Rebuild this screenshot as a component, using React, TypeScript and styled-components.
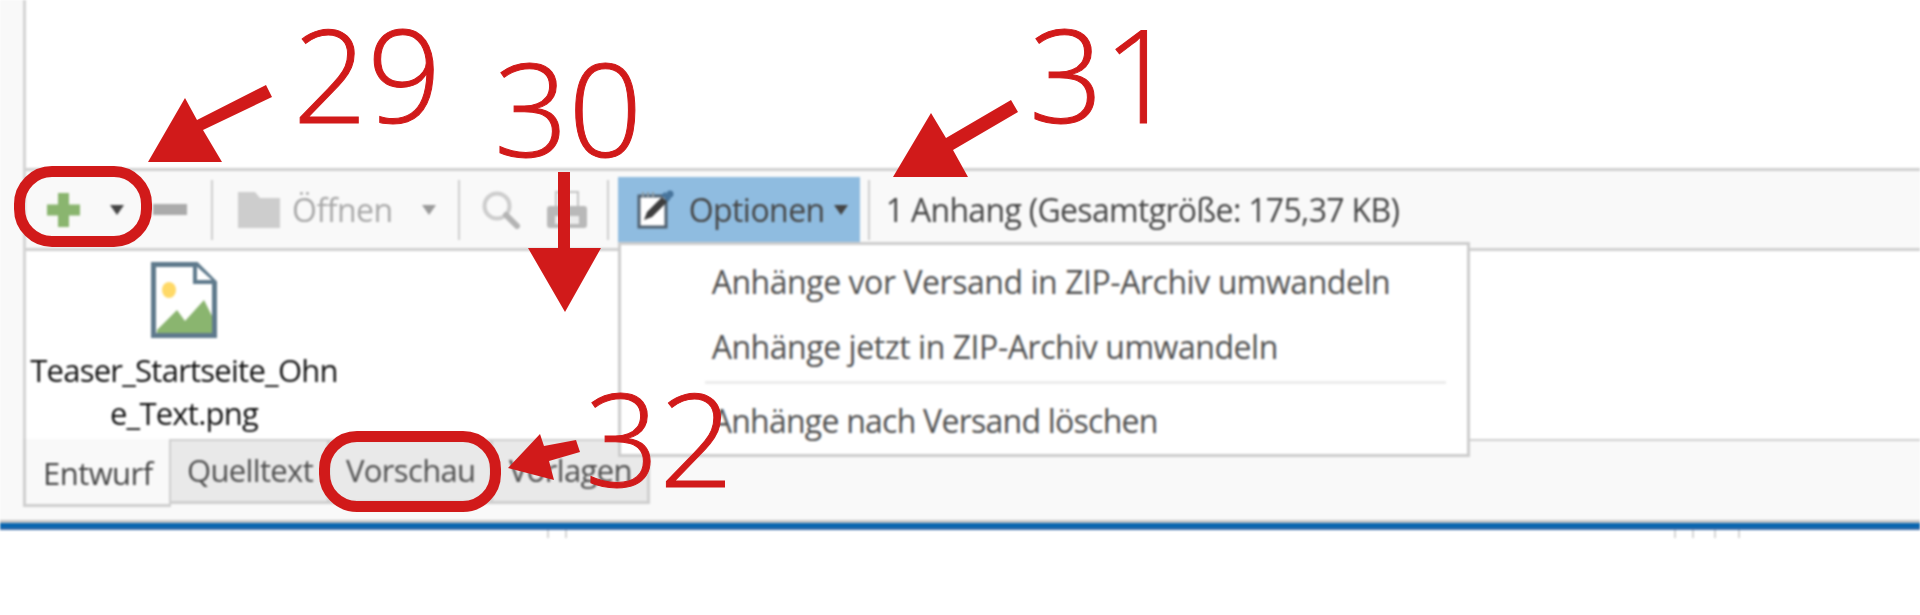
import React from "react";
import styled, { createGlobalStyle } from "styled-components";

const Global = createGlobalStyle`
  html, body { margin: 0; padding: 0; background: #fff; overflow: hidden; }
  * { box-sizing: border-box; }
`;
const RED = "#d11a1a";
const FONT = `"Open Sans", "Noto Sans", "Liberation Sans", sans-serif`;

const Page = styled.div`
  position: relative; width: 1920px; height: 615px; overflow: hidden; background: #fff;
  font-family: ${FONT};
`;
const Shot = styled.div`display: flex; flex-direction: column; filter: blur(0.9px);`;
const Upper = styled.div`display: flex; height: 439px; background: #f9f9f9;`;
const Main = styled.div`
  flex: 1; display: flex; flex-direction: column; margin-left: 23px;
  border-left: 3px solid #d4d4d4; background: #fff;
`;
const Blank = styled.div`height: 168px;`;
const Toolbar = styled.div`
  position: relative; z-index: 2; height: 83px; display: flex; align-items: center;
  background: #f9f9f9; border-top: 3px solid #d0d0d0; border-bottom: 3px solid #d0d0d0;
`;
const Slot = styled.div<{ $ml: number }>`display: flex; flex: none; margin-left: ${p => p.$ml}px;`;
const Sep = styled.div<{ $ml: number }>`
  flex: none; width: 2px; height: 60px; margin-left: ${p => p.$ml}px; background: #cfcfcf;
`;
const Label = styled.span<{ $ml: number; $muted?: boolean; $sp: number }>`
  flex: none; margin-left: ${p => p.$ml}px; font-size: 32px; line-height: 40px;
  letter-spacing: ${p => p.$sp}px; color: ${p => (p.$muted ? "#a9a9a9" : "#454545")}; white-space: nowrap;
`;
const OptionWrap = styled.div`position: relative; flex: none; margin-left: 9px;`;
const OptionButton = styled.div`
  width: 242px; height: 66px; background: #8fbce0; display: flex; align-items: center; padding-left: 19px;
`;
const Menu = styled.div`
  position: absolute; top: 65px; left: 0; width: 852px; height: 215px; background: #fff;
  border: 3px solid #cdcdcd; padding-top: 4px;
`;
const MenuItem = styled.div<{ $sp: number }>`
  height: 65px; line-height: 65px; padding-left: 91px; font-size: 32px; color: #505050;
  letter-spacing: ${p => p.$sp}px; white-space: nowrap;
`;
const MenuSep = styled.div`height: 3px; margin: 2px 21px 4px 84px; background: #ececec;`;
const Pane = styled.div`flex: 1; padding: 11px 0 0 2px; width: 314px; display: flex; flex-direction: column; align-items: center;`;
const FileName = styled.div`
  margin-top: 11px; font-size: 31px; line-height: 43px; text-align: center; color: #111;
  letter-spacing: -0.75px; white-space: nowrap;
`;
const Strip = styled.div`
  height: 84px; background: #f9f9f9; border-bottom: 3px solid #c6c6c6;
  padding-left: 23px; display: flex; align-items: flex-start;
`;
const ActiveTab = styled.div`
  width: 148px; height: 68px; background: #f9f9f9; color: #454545;
  border: 3px solid #cfcfcf; border-top: none; border-right-width: 2px;
  font-size: 31px; line-height: 68px; padding-left: 17px; letter-spacing: -0.55px;
`;
const Tab = styled.div<{ $w: number }>`
  width: ${p => p.$w}px; height: 65px; background: #e9e9e9; color: #505050;
  border-top: 2px solid #cfcfcf; border-right: 3px solid #cfcfcf; border-bottom: 3px solid #cfcfcf;
  font-size: 31px; line-height: 58px; padding-left: 16px; letter-spacing: -0.65px; white-space: nowrap;
`;
const StripRest = styled.div`flex: 1; border-top: 2px solid #cfcfcf;`;
const Blue = styled.div`height: 7px; background: #0a66b0; border-bottom: 2px solid #3f6ea8;`;
const Ticks = styled.div`display: flex; height: 8px;`;
const Tick = styled.div<{ $ml: number }>`width: 2px; margin-left: ${p => p.$ml}px; background: #d4d4d4;`;

const Overlay = styled.svg`position: absolute; inset: 0; width: 1920px; height: 615px; filter: blur(0.4px);`;
const Ring = styled.div<{ $x: number; $y: number; $w: number; $h: number }>`
  position: absolute; left: ${p => p.$x}px; top: ${p => p.$y}px; width: ${p => p.$w}px; height: ${p => p.$h}px;
  border: 11px solid ${RED}; border-radius: 38px;
`;
const Num = styled.span<{ $x: number; $y: number }>`
  position: absolute; left: ${p => p.$x}px; top: ${p => p.$y}px; color: ${RED};
  font-family: "Open Sans", sans-serif; font-weight: 300; font-size: 130px; line-height: 180px;
  -webkit-text-stroke: 1px ${RED};
`;

const Caret = ({ c = "#444", w = 14 }: { c?: string; w?: number }) => (
  <svg width={w} height="10" viewBox="0 0 14 10"><path d="M0 0h14L7 10z" fill={c} /></svg>
);

export default function App() {
  return (
    <Page>
      <Global />
      <Shot>
        <Upper>
          <Main>
            <Blank />
            <Toolbar>
              <Slot $ml={21}>
                <svg width="33" height="34" viewBox="0 0 33 34"><path d="M11 0h11v11.500h11v11H22V34H11V22.500H0v-11h11z" fill="#8ab56f" /></svg>
              </Slot>
              <Slot $ml={30}><Caret /></Slot>
              <Slot $ml={29}><svg width="34" height="11"><rect width="34" height="11" fill="#ababab" /></svg></Slot>
              <Sep $ml={24} />
              <Slot $ml={24}>
                <svg width="43" height="36" viewBox="0 0 43 36"><path d="M1 0h17l5 6h20v30H1z" fill="#cdcdcd" /></svg>
              </Slot>
              <Label $ml={12} $muted $sp={-0.5}>Öffnen</Label>
              <Slot $ml={29}><Caret c="#9a9a9a" /></Slot>
              <Sep $ml={22} />
              <Slot $ml={22}>
                <svg width="38" height="38" viewBox="0 0 38 38">
                  <circle cx="15" cy="15" r="12.500" fill="none" stroke="#cdcdcd" strokeWidth="4" />
                  <path d="M24 24l11 11" stroke="#b4b4b4" strokeWidth="6" strokeLinecap="round" />
                </svg>
              </Slot>
              <Slot $ml={27}>
                <svg width="40" height="37" viewBox="0 0 40 37">
                  <rect x="9" y="1" width="22" height="16" fill="none" stroke="#c4c4c4" strokeWidth="2" />
                  <path d="M3 15h34a3 3 0 0 1 3 3v16a3 3 0 0 1-3 3H3a3 3 0 0 1-3-3V18a3 3 0 0 1 3-3z" fill="#b9b9b9" />
                  <rect x="8" y="25" width="24" height="8" fill="#ececec" />
                </svg>
              </Slot>
              <Sep $ml={20} />
              <OptionWrap>
                <OptionButton>
                  <svg width="39" height="39" viewBox="0 0 39 39">
                    <rect x="2" y="6" width="27" height="31" fill="#fff" stroke="#4f6070" strokeWidth="3" />
                    <path d="M6 2v5M11 2v5M16 2v5" stroke="#8f9ba3" strokeWidth="2" />
                    <path d="M7 30l3-8 15-15 5 5-15 15z" fill="#3d3d3d" />
                    <path d="M24 5l4-3 6 6-3 4z" fill="#47749b" />
                    <circle cx="33" cy="4" r="3.500" fill="#47749b" />
                  </svg>
                  <Label $ml={13} $sp={-0.55}>Optionen</Label>
                  <Slot $ml={9}><Caret /></Slot>
                </OptionButton>
                <Menu>
                  <MenuItem $sp={-0.45}>Anhänge vor Versand in ZIP-Archiv umwandeln</MenuItem>
                  <MenuItem $sp={-0.45}>Anhänge jetzt in ZIP-Archiv umwandeln</MenuItem>
                  <MenuSep />
                  <MenuItem $sp={-0.75}>Anhänge nach Versand löschen</MenuItem>
                </Menu>
              </OptionWrap>
              <Sep $ml={8} />
              <Label $ml={16} $sp={-0.68}>1 Anhang (Gesamtgröße: 175,37 KB)</Label>
            </Toolbar>
            <Pane>
              <svg width="66" height="76" viewBox="0 0 66 76">
                <path d="M2.500 2.500h43l18 18v53h-61z" fill="#fff" stroke="#5f7a8c" strokeWidth="5" />
                <path d="M44 3v17h19" fill="#fff" stroke="#5f7a8c" strokeWidth="4" />
                <ellipse cx="18" cy="28" rx="7" ry="8" fill="#ffd966" />
                <path d="M6 71v-3l20-20 8 11 19-21 8 16v17z" fill="#8ab56f" />
              </svg>
              <FileName>Teaser_Startseite_Ohn<br />e_Text.png</FileName>
            </Pane>
          </Main>
        </Upper>
        <Strip>
          <ActiveTab>Entwurf</ActiveTab>
          <Tab $w={159}>Quelltext</Tab>
          <Tab $w={163}>Vorschau</Tab>
          <Tab $w={157}>Vorlagen</Tab>
          <StripRest />
        </Strip>
        <Blue />
        <Ticks>
          <Tick $ml={547} /><Tick $ml={16} /><Tick $ml={1107} /><Tick $ml={16} /><Tick $ml={20} /><Tick $ml={22} />
        </Ticks>
      </Shot>

      <Overlay viewBox="0 0 1920 615">
        <g fill={RED}>
          <path d="M185 98L148 162H222L203 130L272 97L266 85L197 120z" />
          <path d="M931 113L893 177H968L953 150L1018 112L1011 100L946 138z" />
          <path d="M558 172H570V248H601L565 312L528 248H558z" />
          <path d="M508 468L540 434L544 446L576 440L580 452L549 461L554 480z" />
        </g>
      </Overlay>
      <Ring $x={14} $y={166} $w={138} $h={81} />
      <Ring $x={319} $y={431} $w={182} $h={81} />
      <Num $x={293} $y={-17}>29</Num>
      <Num $x={494} $y={17}>30</Num>
      <Num $x={1029} $y={-17}>31</Num>
      <Num $x={585} $y={347}>32</Num>
    </Page>
  );
}
